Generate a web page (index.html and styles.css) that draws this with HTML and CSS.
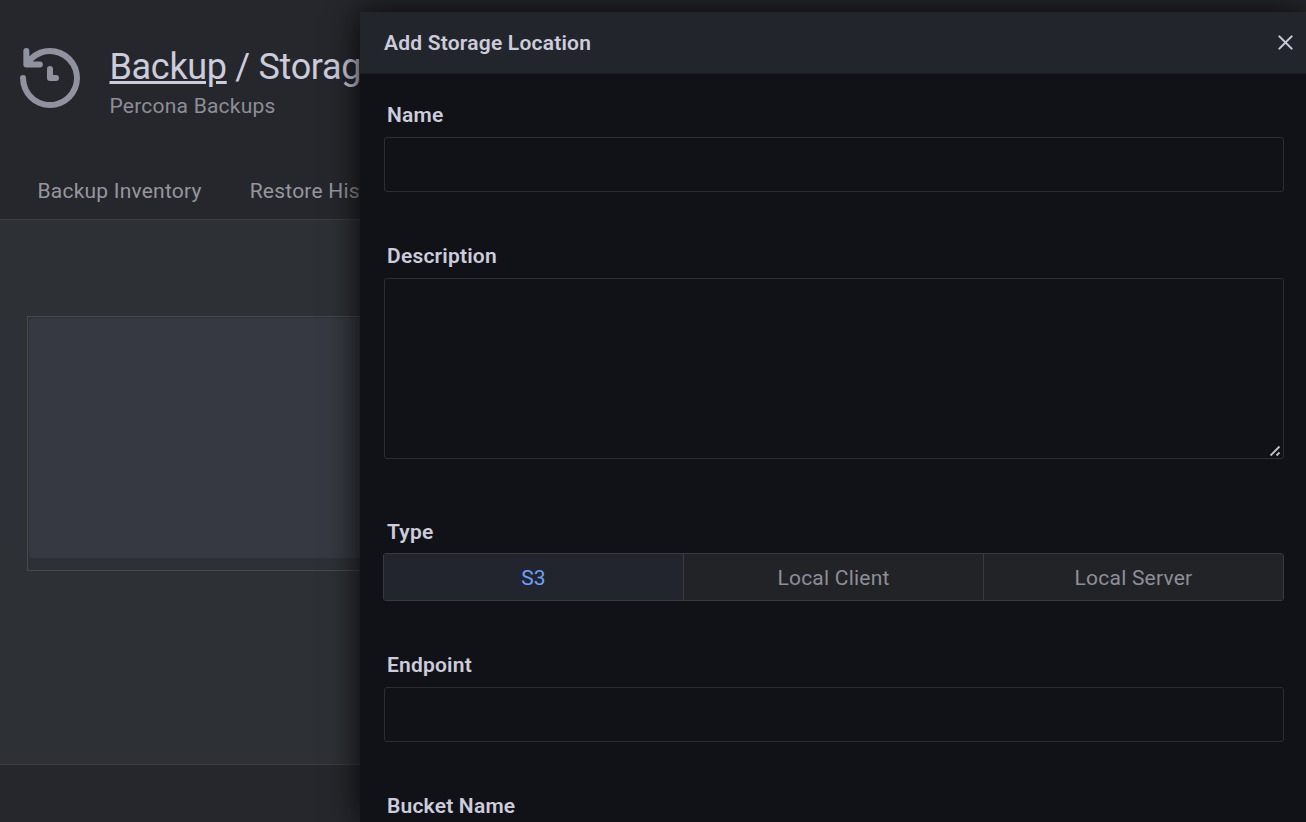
FILE: index.html
```html
<!DOCTYPE html>
<html lang="en">
<head>
<meta charset="utf-8">
<title>Backup / Storage</title>
<link rel="stylesheet" href="styles.css">
</head>
<body>
<div class="page">
  <header class="page-header">
    <div class="page-title">
      <svg class="page-icon" viewBox="0 0 24 24" aria-hidden="true"><path d="M12,2A10,10,0,0,0,5.12,4.77V3a1,1,0,0,0-2,0V7.5a1,1,0,0,0,1,1H8.62a1,1,0,0,0,0-2H6.22A8,8,0,1,1,4,12a1,1,0,0,0-2,0A10,10,0,1,0,12,2Zm0,6a1,1,0,0,0-1,1v3a1,1,0,0,0,1,1h2a1,1,0,0,0,0-2H13V9A1,1,0,0,0,12,8Z"/></svg>
      <div class="page-heading">
        <h1><a class="crumb" href="#">Backup</a> / Storage</h1>
        <p class="subtitle">Percona Backups</p>
      </div>
    </div>
    <nav class="tabs">
      <a class="tab">Backup Inventory</a>
      <a class="tab">Restore History</a>
    </nav>
  </header>
  <main class="page-content">
    <div class="table-frame"><div class="table-loading"></div></div>
  </main>
</div>
<aside class="drawer">
  <header class="drawer-header">
    <h2>Add Storage Location</h2>
    <button class="close" aria-label="Close"><svg viewBox="0 0 24 24"><path d="M13.41,12l6.3-6.29a1,1,0,1,0-1.42-1.42L12,10.59,5.71,4.29A1,1,0,0,0,4.29,5.71L10.59,12l-6.3,6.29a1,1,0,0,0,0,1.42,1,1,0,0,0,1.42,0L12,13.41l6.29,6.3a1,1,0,0,0,1.42,0,1,1,0,0,0,0-1.42Z"/></svg></button>
  </header>
  <form class="form">
    <div class="field"><label for="name">Name</label><input id="name" class="control" type="text"></div>
    <div class="field description">
      <label for="description">Description</label>
      <div class="textarea-wrap">
        <textarea id="description" class="control"></textarea>
        <svg class="grip" viewBox="0 0 12 12" aria-hidden="true"><path d="M1.5 10.5 10.5 1.5M7.5 10.5 10.5 7.5"/></svg>
      </div>
    </div>
    <div class="field type">
      <label>Type</label>
      <div class="segments">
        <span class="segment active">S3</span>
        <span class="segment">Local Client</span>
        <span class="segment">Local Server</span>
      </div>
    </div>
    <div class="field"><label for="endpoint">Endpoint</label><input id="endpoint" class="control" type="text"></div>
    <div class="field"><label>Bucket Name</label></div>
  </form>
</aside>
</body>
</html>
```

FILE: styles.css
```css
* { box-sizing: border-box; }
body {
  margin: 0;
  height: 822px;
  position: relative;
  overflow: hidden;
  background: #26272c;
  color: #ccccdc;
  font: 400 21px/26px Roboto, sans-serif;
  letter-spacing: 0.22px;
}
h1, h2, p { margin: 0; }

.page { height: 822px; display: flex; flex-direction: column; }
.page-header {
  height: 220px;
  padding: 42px 14px 0;
  border-bottom: 1px solid #393c41;
  display: flex;
  flex-direction: column;
  justify-content: space-between;
}
.page-title { display: flex; gap: 23.5px; }
.page-icon { width: 72px; height: 72px; fill: #9192a0; flex: none; }
h1 { font-size: 36px; line-height: 42px; padding-top: 4px; font-weight: 400; letter-spacing: -0.32px; white-space: nowrap; }
.crumb { color: inherit; text-decoration: underline; }
.subtitle { color: #8e8e99; line-height: 26px; margin-top: 5px; }
.tabs { display: flex; gap: 48px; padding: 0 23.5px 15px; color: #96969f; }
.page-content {
  height: 545px;
  padding: 96px 27px 0;
  background: #2d3034;
  border-bottom: 1px solid #393c41;
}
.table-frame { height: 255px; padding: 1px; border: 1px solid #47494e; }
.table-loading { height: 240px; border-radius: 4px; background: #363941; }

.drawer {
  position: absolute;
  top: 12px;
  right: 0;
  bottom: 0;
  width: 946px;
  background: #111217;
  box-shadow: 0 0 30px #060608;
}
.drawer-header {
  height: 62px;
  padding: 0 10px 0 24px;
  display: flex;
  align-items: center;
  justify-content: space-between;
  background: #22252b;
  border-bottom: 1px solid #1d1e23;
}
h2 { font-size: 21px; line-height: 26px; font-weight: 600; letter-spacing: 0.21px; }
.close { border: 0; padding: 0 0 1px; background: none; display: flex; }
.close svg { width: 21px; height: 21px; fill: #ccccdc; stroke: #ccccdc; stroke-width: 0.3; }

.form { padding: 28px 22px 0 24px; display: flex; flex-direction: column; gap: 51px; }
.field { display: flex; flex-direction: column; gap: 9px; }
.field label { padding-left: 3px; font-weight: 600; letter-spacing: 0.2px; }
.description { margin-bottom: 9px; }
.control {
  display: block;
  width: 100%;
  height: 55px;
  border: 1px solid #2d2e33;
  border-radius: 3px;
  background: #111217;
}
.textarea-wrap { position: relative; }
textarea.control { height: 181px; resize: none; }
.grip { position: absolute; right: 3px; bottom: 2px; width: 12px; height: 12px; stroke: #c2c2c2; stroke-width: 1.8; }
.type { gap: 8px; }
.segments {
  height: 48px;
  margin-left: -1px;
  display: grid;
  grid-template-columns: 299px 300px 1fr;
  border: 1px solid #3a3b41;
  border-radius: 3px;
  overflow: hidden;
}
.segment {
  display: flex;
  align-items: center;
  justify-content: center;
  padding-top: 2px;
  background: #222327;
  color: #8e8e99;
}
.segment + .segment { border-left: 1px solid #3a3b41; }
.segment.active { background: #22252d; color: #6e9fff; }
```
